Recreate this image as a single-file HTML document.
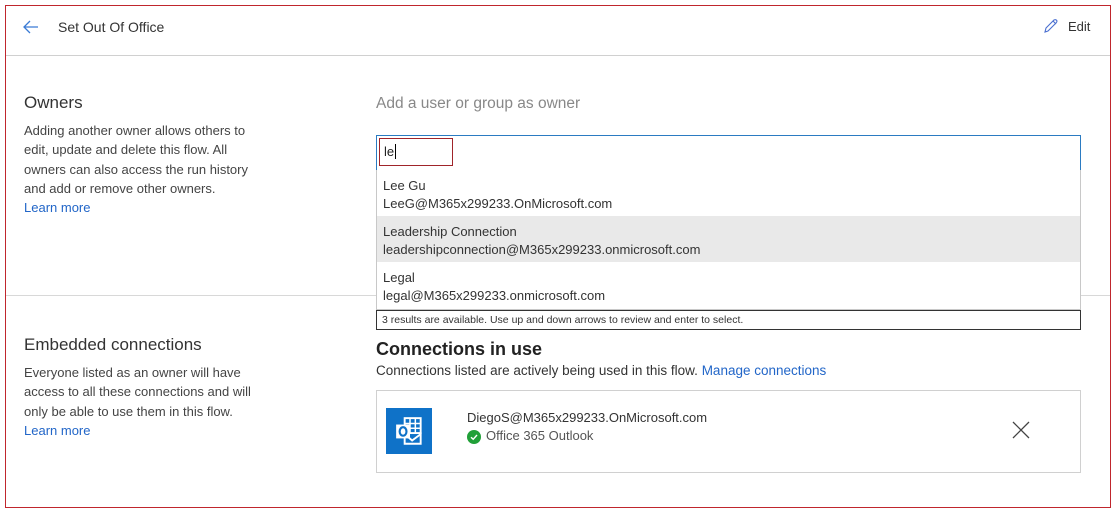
<!DOCTYPE html>
<html><head><style>
*{box-sizing:border-box;margin:0;padding:0}
body{width:1117px;height:515px;background:#fff;font-family:"Segoe UI","Liberation Sans",sans-serif;color:#333;position:relative;overflow:hidden}
.a{position:absolute}
.frame{left:5px;top:5px;width:1106px;height:503px;border:1px solid #c0262d}
.t{white-space:nowrap}
a{color:#2266c8;text-decoration:none}
</style></head><body>
<div class="a frame"></div>
<svg class="a" style="left:23px;top:20px" width="16" height="14" viewBox="0 0 16 14"><path d="M7 1L1 7L7 13M1 7H15" fill="none" stroke="#3a7bd5" stroke-width="1.3"/></svg>
<div class="a t" style="left:58px;top:19px;font-size:14px;color:#333">Set Out Of Office</div>
<svg class="a" style="left:1043px;top:18px" width="16" height="16" viewBox="0 0 16 16"><path d="M2 14L3 10L11 2Q13 1 14 3Q14 4 13 5L5 13Z M10 3L13 6" fill="none" stroke="#4a6fd0" stroke-width="1.1"/></svg>
<div class="a t" style="left:1068px;top:19px;font-size:13px;color:#333">Edit</div>
<div class="a" style="left:6px;top:55px;width:1104px;height:1px;background:#d0d0d0"></div>
<div class="a" style="left:6px;top:295px;width:1104px;height:1px;background:#d8d8d8"></div>

<div class="a t" style="left:24px;top:93px;font-size:17px;color:#333">Owners</div>
<div class="a t" style="left:24px;top:121px;font-size:13px;line-height:19.3px;color:#444">Adding another owner allows others to<br>edit, update and delete this flow. All<br>owners can also access the run history<br>and add or remove other owners.<br><a>Learn more</a></div>

<div class="a t" style="left:376px;top:95px;font-size:15.5px;color:#888">Add a user or group as owner</div>
<div class="a" style="left:376px;top:135px;width:705px;height:36px;border:1px solid #2b7bc2;background:#fff"></div>
<div class="a" style="left:379px;top:138px;width:74px;height:28px;border:1px solid #a0242a"></div>
<div class="a t" style="left:384px;top:144px;font-size:13px;color:#222">le<span style="border-left:1px solid #000;margin-left:1px"></span></div>
<div class="a" style="left:376px;top:170px;width:705px;height:140px;border:1px solid #c8c8c8;border-top:none;background:#fff">
 <div style="height:46px;padding:7px 6px;font-size:13px;line-height:18px;color:#333">Lee Gu<br>LeeG@M365x299233.OnMicrosoft.com</div>
 <div style="height:46px;padding:7px 6px;font-size:13px;line-height:18px;color:#333;background:#e9e9e9">Leadership Connection<br>leadershipconnection@M365x299233.onmicrosoft.com</div>
 <div style="height:46px;padding:7px 6px;font-size:13px;line-height:18px;color:#333">Legal<br>legal@M365x299233.onmicrosoft.com</div>
</div>
<div class="a t" style="left:376px;top:310px;width:705px;height:20px;border:1px solid #333;background:#fff;font-size:10.5px;padding:3px 5px;color:#333">3 results are available. Use up and down arrows to review and enter to select.</div>

<div class="a t" style="left:24px;top:335px;font-size:17px;color:#333">Embedded connections</div>
<div class="a t" style="left:24px;top:363px;font-size:13px;line-height:19.3px;color:#444">Everyone listed as an owner will have<br>access to all these connections and will<br>only be able to use them in this flow.<br><a>Learn more</a></div>

<div class="a t" style="left:376px;top:339px;font-size:18px;font-weight:bold;color:#222">Connections in use</div>
<div class="a t" style="left:376px;top:363px;font-size:13.5px;color:#333">Connections listed are actively being used in this flow. <a>Manage connections</a></div>
<div class="a" style="left:376px;top:390px;width:705px;height:83px;border:1px solid #d0d0d0"></div>
<div class="a" style="left:386px;top:408px;width:46px;height:46px;background:#0f72c8"></div>
<svg class="a" style="left:394px;top:416px" width="32" height="32" viewBox="0 0 30 30"><rect x="10" y="2" width="15" height="14" fill="none" stroke="#fff" stroke-width="1.8"/><path d="M15 2V16M20 2V16M10 7H25M10 11.5H25" stroke="#fff" stroke-width="1.4"/><path d="M10 17V26H25V17L17 23Z" fill="none" stroke="#fff" stroke-width="1.8"/><rect x="2" y="8" width="13" height="13" fill="#fff"/><ellipse cx="8.5" cy="14.5" rx="3.2" ry="4" fill="none" stroke="#0f72c8" stroke-width="2"/></svg>
<div class="a t" style="left:467px;top:410px;font-size:13px;color:#333">DiegoS@M365x299233.OnMicrosoft.com</div>
<svg class="a" style="left:467px;top:430px" width="14" height="14" viewBox="0 0 14 14"><circle cx="7" cy="7" r="7" fill="#21a038"/><path d="M4 7.2L6.2 9.3L10 5" fill="none" stroke="#fff" stroke-width="1.4"/></svg>
<div class="a t" style="left:486px;top:428px;font-size:13px;color:#555">Office 365 Outlook</div>
<svg class="a" style="left:1012px;top:421px" width="18" height="18" viewBox="0 0 18 18"><path d="M1 1L17 17M17 1L1 17" stroke="#444" stroke-width="1.3"/></svg>
</body></html>
